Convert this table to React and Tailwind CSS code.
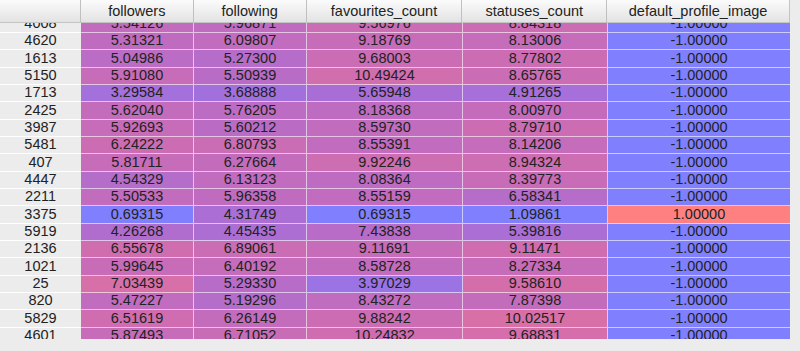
import React from "react";

const columns = [
    { name: "followers", w: "w-[113px]", lo: 0.69, hi: 10 },
    { name: "following", w: "w-[113px]", lo: 1, hi: 11 },
    { name: "favourites_count", w: "w-[156px]", lo: 0.69, hi: 16 },
    { name: "statuses_count", w: "w-[145px]", lo: 1.1, hi: 14 },
    { name: "default_profile_image", w: "w-[182px]", lo: -1, hi: 1 },
];

const rows = [
    [4008, 5.54126, 5.96871, 9.56976, 8.84318, -1],
    [4620, 5.31321, 6.09807, 9.18769, 8.13006, -1],
    [1613, 5.04986, 5.273, 9.68003, 8.77802, -1],
    [5150, 5.9108, 5.50939, 10.49424, 8.65765, -1],
    [1713, 3.29584, 3.68888, 5.65948, 4.91265, -1],
    [2425, 5.6204, 5.76205, 8.18368, 8.0097, -1],
    [3987, 5.92693, 5.60212, 8.5973, 8.7971, -1],
    [5481, 6.24222, 6.80793, 8.55391, 8.14206, -1],
    [407, 5.81711, 6.27664, 9.92246, 8.94324, -1],
    [4447, 4.54329, 6.13123, 8.08364, 8.39773, -1],
    [2211, 5.50533, 5.96358, 8.55159, 6.58341, -1],
    [3375, 0.69315, 4.31749, 0.69315, 1.09861, 1],
    [5919, 4.26268, 4.45435, 7.43838, 5.39816, -1],
    [2136, 6.55678, 6.89061, 9.11691, 9.11471, -1],
    [1021, 5.99645, 6.40192, 8.58728, 8.27334, -1],
    [25, 7.03439, 5.2933, 3.97029, 9.5861, -1],
    [820, 5.47227, 5.19296, 8.43272, 7.87398, -1],
    [5829, 6.51619, 6.26149, 9.88242, 10.02517, -1],
    [4601, 5.87493, 6.71052, 10.24832, 9.68831, -1],
];

// blue (low) -> red (high), with a little dip in green through the middle
const cellColor = (v, lo, hi) => {
    let t = (v - lo) / (hi - lo);
    t = Math.max(0, Math.min(1, t));
    const r = Math.round(128 + 127 * t);
    const g = Math.round(128 - 80 * t * (1 - t));
    const b = Math.round(255 - 127 * t);
    return `rgb(${r}, ${g}, ${b})`;
};

const App = () => {
    return (
        <div className="w-[800px] h-[351px] bg-[#ececec] text-[#222] text-[14.5px] overflow-hidden" style={{ fontFamily: '"Liberation Sans", Arial, sans-serif' }}>
            <div className="w-[790px]">
                {/* header */}
                <div className="flex h-[23px] bg-gradient-to-b from-[#fbfbfb] to-[#e3e3e3] border-b border-[#c4c4c4] border-r">
                    <div className="w-[81px] border-r border-[#c0c0c0]"></div>
                    {columns.map((col, i) => (
                        <div
                            key={col.name}
                            className={`${col.w} flex items-center justify-center leading-none ${i < columns.length - 1 ? "border-r border-[#c0c0c0]" : ""}`}
                        >
                            {col.name}
                        </div>
                    ))}
                </div>

                {/* body, scrolled down a little */}
                <div className="h-[316px] overflow-hidden">
                    <div className="-mt-[7.33px]">
                        {rows.map((row) => (
                            <div key={row[0]} className="flex h-[17.33px]">
                                <div className="w-[81px] flex items-center justify-center bg-[#ececec] border-b border-white">
                                    {row[0]}
                                </div>
                                {columns.map((col, i) => (
                                    <div
                                        key={col.name}
                                        className={`${col.w} flex items-center justify-center border-b border-white/60 ${i < columns.length - 1 ? "border-r" : ""}`}
                                        style={{ backgroundColor: cellColor(row[i + 1], col.lo, col.hi) }}
                                    >
                                        {row[i + 1].toFixed(5)}
                                    </div>
                                ))}
                            </div>
                        ))}
                    </div>
                </div>
            </div>
        </div>
    );
};

export default App;
